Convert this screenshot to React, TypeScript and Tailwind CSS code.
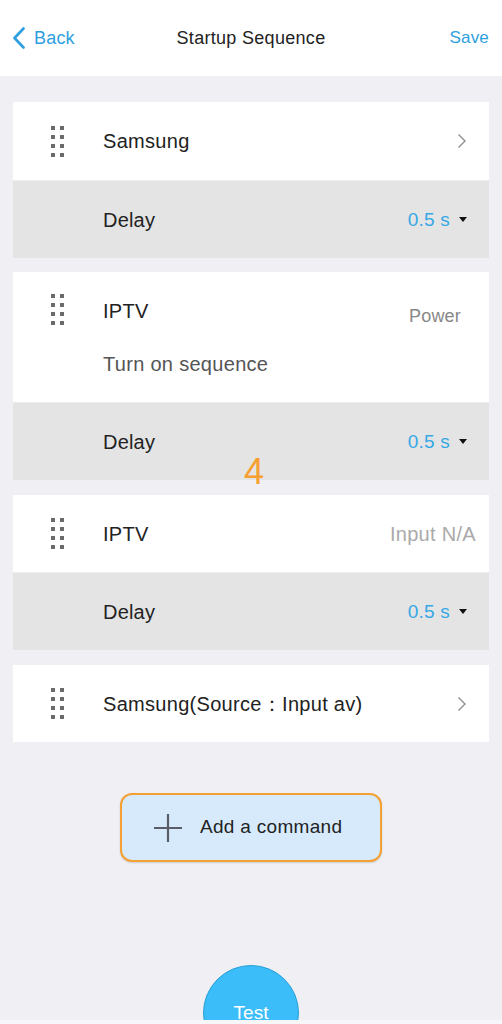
import React from "react";

const font = { fontFamily: '"Liberation Sans", Arial, sans-serif' };

function Handle() {
  return (
    <div className="grid grid-cols-2 gap-x-[5px] gap-y-[5px] w-[13px] shrink-0">
      {Array.from({ length: 8 }).map((_, i) => (
        <div key={i} className="w-[4px] h-[4px] bg-[#6b6b6b]" />
      ))}
    </div>
  );
}

function Chevron() {
  return (
    <svg width="10" height="16" viewBox="0 0 10 16" className="shrink-0">
      <path d="M1.5 1.5 L8 8 L1.5 14.5" fill="none" stroke="#8e8e8e" strokeWidth="1.4" />
    </svg>
  );
}

function DelayRow() {
  return (
    <div className="h-[78px] bg-[#e4e4e4] border-t border-[#ececec] flex items-center pl-[90px] pr-[22px]">
      <span className="text-[20px] tracking-[0.2px] text-[#222]">Delay</span>
      <span className="ml-auto mt-[1px] text-[19px] tracking-[0.2px] text-[#35a8e6]">0.5 s</span>
      <svg width="8" height="5" viewBox="0 0 8 5" className="ml-[9px]">
        <path d="M0 0 L8 0 L4 5 Z" fill="#111" />
      </svg>
    </div>
  );
}

export default function App() {
  return (
    <div style={font} className="w-[502px] h-[1024px] overflow-hidden bg-[#f7f7f9] relative">
      <div className="h-[1020px] overflow-hidden bg-[#efeff4] flex flex-col">
        <div className="h-[76px] bg-white flex items-center px-[12px] shrink-0">
          <div className="flex items-center w-[120px]">
            <svg width="14" height="22" viewBox="0 0 14 22">
              <path d="M11.5 1.5 L2.5 11 L11.5 20.5" fill="none" stroke="#2d9fe0" strokeWidth="2.6" strokeLinecap="round" strokeLinejoin="round" />
            </svg>
            <span className="ml-[8px] text-[18px] tracking-[0.2px] text-[#2d9fe0]">Back</span>
          </div>
          <div className="flex-1 text-center text-[18px] tracking-[0.3px] text-[#222]">Startup Sequence</div>
          <div className="w-[120px] text-right text-[17px] tracking-[0.2px] text-[#2d9fe0] pr-[1px]">Save</div>
        </div>

        <div className="px-[13px] pt-[26px] flex flex-col">
          <div>
            <div className="h-[78px] bg-white flex items-center pl-[38px] pr-[22px]">
              <Handle />
              <span className="ml-[39px] text-[20px] tracking-[0.3px] text-[#222]">Samsung</span>
              <span className="ml-auto"><Chevron /></span>
            </div>
            <DelayRow />
          </div>

          <div className="mt-[14px]">
            <div className="h-[130px] bg-white flex items-start pl-[38px] pr-[28px]">
              <div className="mt-[22px]"><Handle /></div>
              <div className="ml-[39px] pt-[27px] flex flex-col">
                <span className="h-6 leading-6 text-[20px] tracking-[0.3px] text-[#222]">IPTV</span>
                <span className="mt-[29px] h-6 leading-6 text-[20px] tracking-[0.3px] text-[#555]">Turn on sequence</span>
              </div>
              <span className="ml-auto mt-[32px] h-6 leading-6 text-[18px] tracking-[0.2px] text-[#888]">Power</span>
            </div>
            <DelayRow />
          </div>

          <div className="mt-[15px]">
            <div className="h-[77px] bg-white flex items-center pl-[38px] pr-[13px]">
              <Handle />
              <span className="ml-[39px] text-[20px] tracking-[0.3px] text-[#222]">IPTV</span>
              <span className="ml-auto text-[20px] tracking-[0.3px] text-[#aaa]">Input N/A</span>
            </div>
            <DelayRow />
          </div>

          <div className="mt-[15px]">
            <div className="h-[77px] bg-white flex items-center pl-[38px] pr-[22px]">
              <Handle />
              <span className="ml-[39px] text-[20px] tracking-[0.3px] text-[#222]">Samsung(Source：Input av)</span>
              <span className="ml-auto"><Chevron /></span>
            </div>
          </div>

          <div className="mt-[51px] flex justify-center">
            <div className="w-[262px] h-[69px] rounded-[12px] border-2 border-[#f5a032] bg-[#d6eafc] flex items-center pl-[31px] shadow-[0_1px_2px_rgba(0,0,0,0.15)]">
              <svg width="30" height="30" viewBox="0 0 30 30">
                <path d="M15 1 V29 M1 15 H29" stroke="#5a5d66" strokeWidth="2.2" />
              </svg>
              <span className="ml-[17px] text-[19px] tracking-[0.3px] text-[#222]">Add a command</span>
            </div>
          </div>

          <div className="mt-[103px] flex justify-center">
            <div className="w-[96px] h-[96px] rounded-full bg-[#3bbdf9] border border-[#2a9fd6] flex items-center justify-center">
              <span className="text-[19px] text-white">Test</span>
            </div>
          </div>
        </div>
      </div>

      <div className="absolute left-[244px] top-[454px] text-[36px] leading-none text-[#f5a030]">4</div>
    </div>
  );
}
